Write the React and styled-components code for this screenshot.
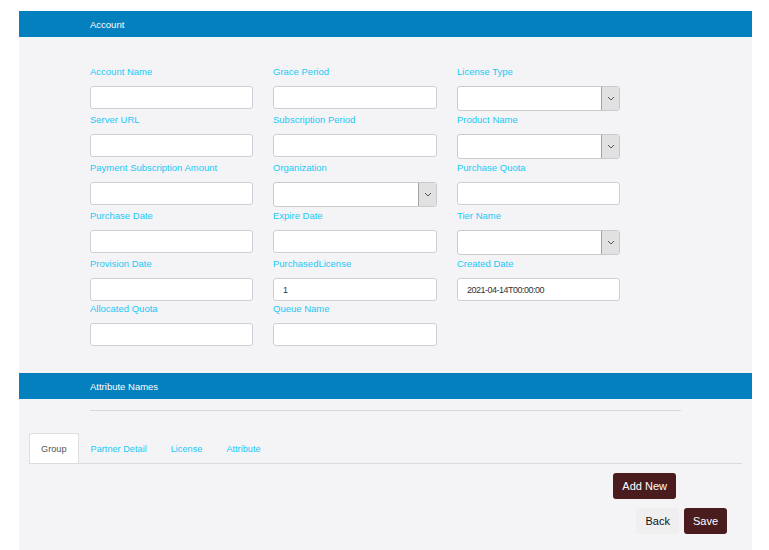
import React from 'react'
import styled, { createGlobalStyle } from 'styled-components'

const GlobalStyle = createGlobalStyle`
  body {
    margin: 0;
    background: #ffffff;
    font-family: 'Liberation Sans', Arial, sans-serif;
  }
`

const Page = styled.div`
  padding: 11px 17px 0 19px;
`

const Panel = styled.div`
  background: #f4f4f6;
  min-height: 539px;
  padding-bottom: 16px;
  box-sizing: border-box;
`

const SectionHeader = styled.div`
  height: 26px;
  background: #0380bd;
  color: #ffffff;
  font-size: 9.5px;
  display: flex;
  align-items: center;
  padding-left: 71px;
  margin-top: ${(p) => p.$top || 0}px;
`

const FormGrid = styled.div`
  display: grid;
  grid-template-columns: 163px 164px 163px;
  column-gap: 20px;
  padding: 27px 0 0 71px;
  align-items: start;
`

const Field = styled.div`
  display: flex;
  flex-direction: column;
`

const Label = styled.label`
  height: 16px;
  line-height: 16px;
  margin-bottom: 6px;
  font-size: 9.5px;
  color: #1ac8f6;
  white-space: nowrap;
`

const TextInput = styled.input`
  height: 23px;
  box-sizing: border-box;
  border: 1px solid #ccd0d6;
  border-radius: 3px;
  background: #ffffff;
  padding: 0 9px;
  font-family: 'Liberation Sans', Arial, sans-serif;
  font-size: 9px;
  letter-spacing: -0.5px;
  color: #333;
  outline: none;
`

const SelectBox = styled.div`
  height: 25px;
  margin-bottom: 1px;
  box-sizing: border-box;
  border: 1px solid #c8cad0;
  border-radius: 3px;
  background: #ffffff;
  display: flex;
  overflow: hidden;
`

const SelectValue = styled.div`
  flex: 1;
`

const SelectArrow = styled.div`
  width: 17px;
  background: #e1e1e1;
  border-left: 1px solid #a3a3a3;
  display: flex;
  align-items: center;
  justify-content: center;
`

const Rule = styled.div`
  margin: 11px 71px 0 71px;
  height: 1px;
  background: #d9d9dd;
`

const TabStrip = styled.div`
  margin: 22px 10px 0 10px;
  display: flex;
  border-bottom: 1px solid #dcdcdf;
`

const Tab = styled.div`
  height: 29px;
  padding: 0 11px;
  display: flex;
  align-items: center;
  font-size: 9.2px;
  border: 1px solid ${(p) => (p.$active ? '#dedede' : 'transparent')};
  border-bottom: none;
  border-radius: 3px 3px 0 0;
  background: ${(p) => (p.$active ? '#ffffff' : 'transparent')};
  color: ${(p) => (p.$active ? '#555555' : '#1ac8f6')};
`

const ButtonRow = styled.div`
  display: flex;
  justify-content: flex-end;
  gap: 5px;
  margin-top: ${(p) => p.$top}px;
  margin-right: ${(p) => p.$right}px;
`

const Button = styled.button`
  height: 26px;
  padding: 0 9px;
  border: none;
  border-radius: 3px;
  font-family: 'Liberation Sans', Arial, sans-serif;
  font-size: 11px;
  background: ${(p) => (p.$primary ? '#4a1c1e' : '#efefef')};
  color: ${(p) => (p.$primary ? '#ffffff' : '#111111')};
`

const Chevron = () => (
  <svg width="8" height="5" viewBox="0 0 8 5">
    <path d="M1 1 L4 4 L7 1" fill="none" stroke="#555" strokeWidth="1" />
  </svg>
)

const fields = [
  { label: 'Account Name' },
  { label: 'Grace Period' },
  { label: 'License Type', select: true },
  { label: 'Server URL' },
  { label: 'Subscription Period' },
  { label: 'Product Name', select: true },
  { label: 'Payment Subscription Amount' },
  { label: 'Organization', select: true },
  { label: 'Purchase Quota' },
  { label: 'Purchase Date' },
  { label: 'Expire Date' },
  { label: 'Tier Name', select: true },
  { label: 'Provision Date' },
  { label: 'PurchasedLicense', value: '1' },
  { label: 'Created Date', value: '2021-04-14T00:00:00' },
  { label: 'Allocated Quota' },
  { label: 'Queue Name' },
]

const tabs = ['Group', 'Partner Detail', 'License', 'Attribute']

export default function App() {
  return (
    <Page>
      <GlobalStyle />
      <Panel>
        <SectionHeader>Account</SectionHeader>
        <FormGrid>
          {fields.map((f) => (
            <Field key={f.label}>
              <Label>{f.label}</Label>
              {f.select ? (
                <SelectBox>
                  <SelectValue />
                  <SelectArrow>
                    <Chevron />
                  </SelectArrow>
                </SelectBox>
              ) : (
                <TextInput defaultValue={f.value || ''} />
              )}
            </Field>
          ))}
        </FormGrid>
        <SectionHeader $top={27}>Attribute Names</SectionHeader>
        <Rule />
        <TabStrip>
          {tabs.map((t, i) => (
            <Tab key={t} $active={i === 0}>
              {t}
            </Tab>
          ))}
        </TabStrip>
        <ButtonRow $top={9} $right={76}>
          <Button $primary>Add New</Button>
        </ButtonRow>
        <ButtonRow $top={9} $right={25}>
          <Button>Back</Button>
          <Button $primary>Save</Button>
        </ButtonRow>
      </Panel>
    </Page>
  )
}
